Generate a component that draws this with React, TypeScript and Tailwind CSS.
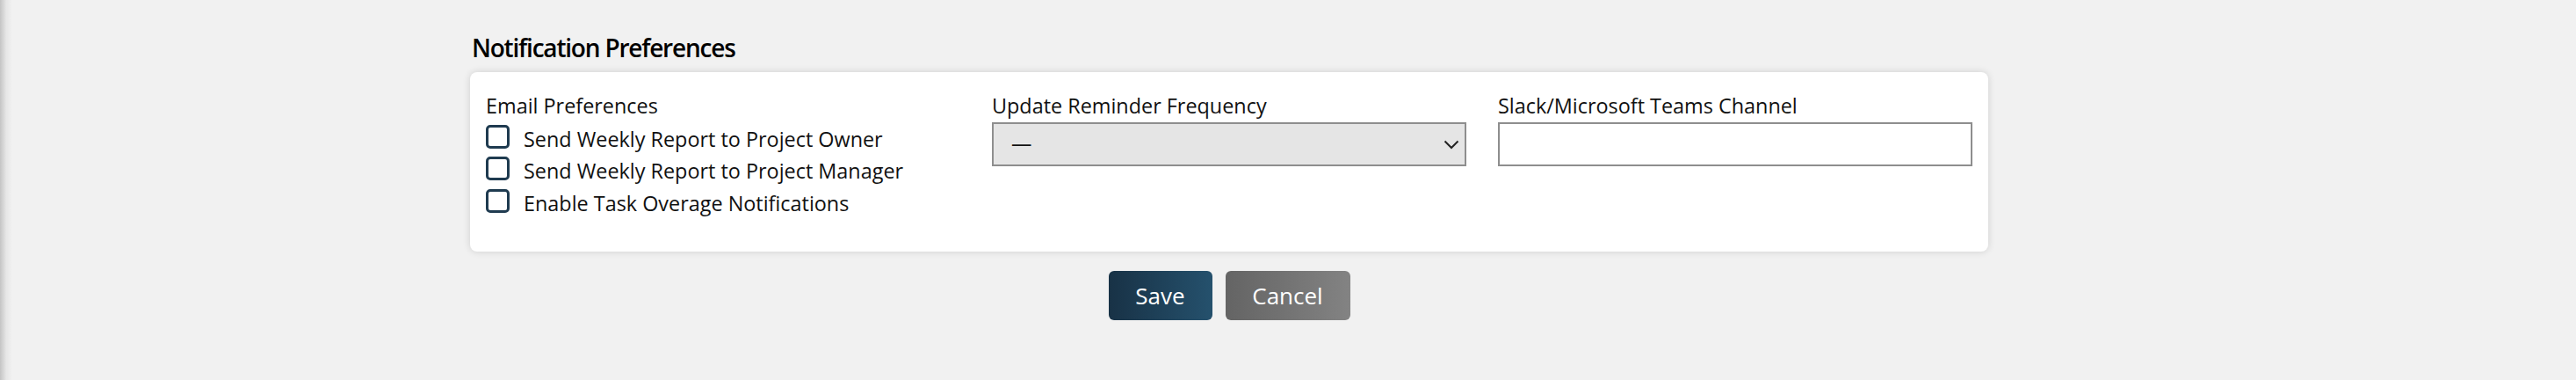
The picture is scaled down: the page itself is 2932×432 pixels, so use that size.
import { useState } from "react";

const options = ["—", "Daily", "Weekly", "Bi-Weekly", "Monthly"];

const emailPrefs = [
  "Send Weekly Report to Project Owner",
  "Send Weekly Report to Project Manager",
  "Enable Task Overage Notifications",
];

export default function App() {
  const [checked, setChecked] = useState<boolean[]>([false, false, false]);
  const [frequency, setFrequency] = useState("—");
  const [channel, setChannel] = useState("");

  const toggle = (index: number) => {
    setChecked(checked.map((c, i) => (i === index ? !c : c)));
  };

  return (
    <div className="flex min-h-[432px] w-[2932px] bg-[#f1f1f1] font-['Open_Sans',sans-serif] text-[#111]">
      <div className="w-[14px] shrink-0 bg-gradient-to-r from-[#c4c4c4] via-[#e6e6e6] to-[#f1f1f1]" />

      <div className="ml-[521px] w-[1728px] pt-[36px]">
        <h2 className="mb-[10px] pl-[2px] text-[28px] leading-[36px] font-semibold tracking-[-1.2px] text-black">
          Notification Preferences
        </h2>

        <div className="h-[204px] rounded-[8px] bg-white px-[18px] pt-[23px] shadow-[0_0_8px_rgba(0,0,0,0.14)]">
          <div className="grid grid-cols-3 gap-[36px]">
            <div>
              <div className="text-[23.4px] leading-[30px]">Email Preferences</div>
              <div className="mt-[2px] flex flex-col">
                {emailPrefs.map((label, index) => (
                  <label key={label} className="flex h-[36.5px] cursor-pointer items-center">
                    <span
                      onClick={() => toggle(index)}
                      className="flex h-[27px] w-[27px] shrink-0 items-center justify-center rounded-[5px] border-[3px] border-[#1f3b50] bg-white"
                    >
                      {checked[index] && (
                        <svg width="16" height="16" viewBox="0 0 16 16" fill="none">
                          <path d="M3 8.5l3 3 7-7" stroke="#1f3b50" strokeWidth="2.5" />
                        </svg>
                      )}
                    </span>
                    <span className="ml-[16px] pt-[5px] text-[23.4px] leading-[30px]">{label}</span>
                  </label>
                ))}
              </div>
            </div>

            <div>
              <div className="text-[23.4px] leading-[30px]">Update Reminder Frequency</div>
              <div className="relative mt-[4px]">
                <select
                  value={frequency}
                  onChange={(e) => setFrequency(e.target.value)}
                  className="h-[50px] w-full appearance-none border-2 border-[#8e8e8e] bg-[#e5e5e5] pl-[20px] text-[23.4px] text-[#111] outline-none"
                >
                  {options.map((o) => (
                    <option key={o} value={o}>
                      {o}
                    </option>
                  ))}
                </select>
                <svg
                  className="pointer-events-none absolute top-[20px] right-[8px]"
                  width="18"
                  height="11"
                  viewBox="0 0 18 11"
                  fill="none"
                >
                  <path d="M1.5 1.5l7.5 7.5 7.5-7.5" stroke="#222" strokeWidth="2" />
                </svg>
              </div>
            </div>

            <div>
              <div className="text-[23.4px] leading-[30px]">Slack/Microsoft Teams Channel</div>
              <input
                value={channel}
                onChange={(e) => setChannel(e.target.value)}
                className="mt-[4px] h-[50px] w-full border-2 border-[#8e8e8e] bg-white px-[12px] text-[23.4px] outline-none"
              />
            </div>
          </div>
        </div>

        <div className="mt-[22px] flex justify-center gap-[15px]">
          <button className="h-[56px] w-[118px] rounded-[6px] bg-gradient-to-r from-[#183246] to-[#25516d] text-[26px] text-white">
            Save
          </button>
          <button className="h-[56px] w-[142px] rounded-[6px] bg-gradient-to-r from-[#646464] to-[#838383] text-[26px] text-white">
            Cancel
          </button>
        </div>
      </div>
    </div>
  );
}
